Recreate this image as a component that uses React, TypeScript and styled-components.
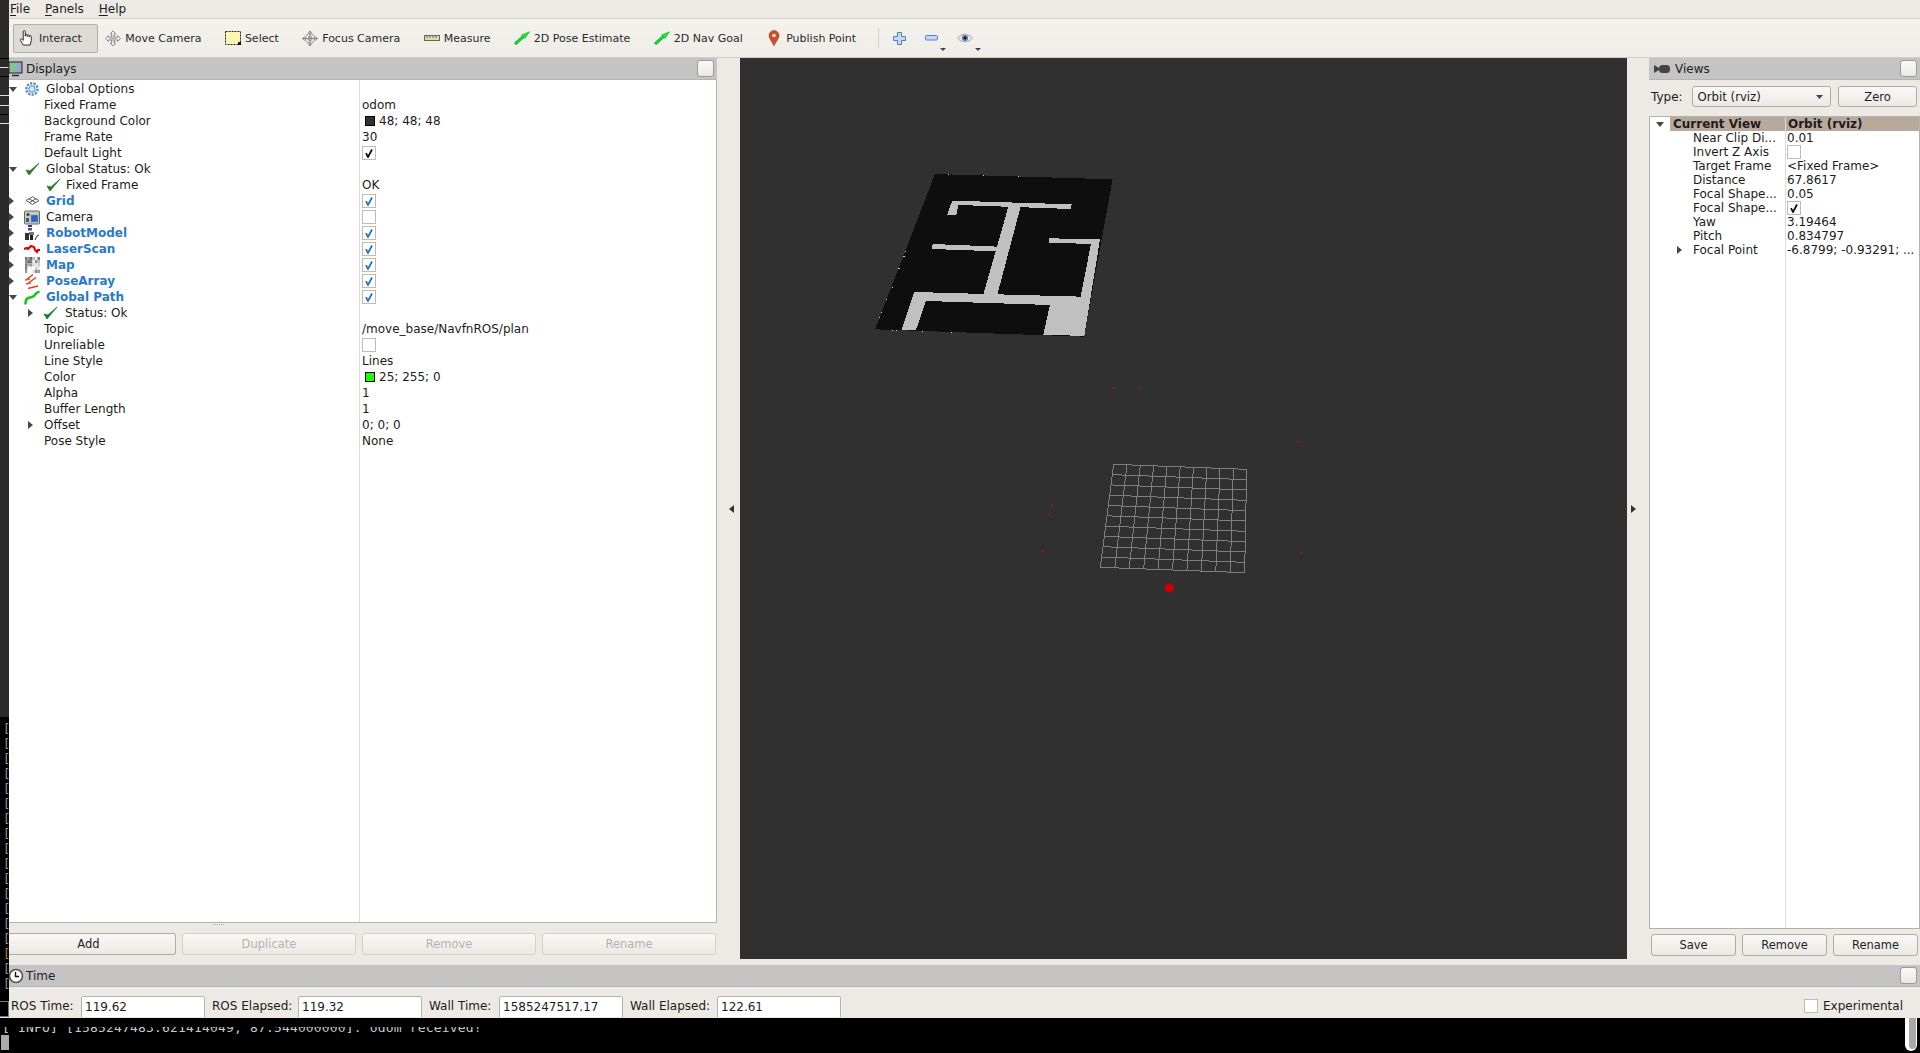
import React from "react";
import styled, { createGlobalStyle } from "styled-components";

const Global = createGlobalStyle`
  html, body { margin: 0; padding: 0; background: #000; }
  * { box-sizing: border-box; }
`;

const Page = styled.div`
  width: 1920px; height: 1053px; overflow: hidden; display: flex; flex-direction: column;
  font-family: "DejaVu Sans", sans-serif; font-size: 12px; color: #1c1c1c; background: #edeae5;
`;
const Upper = styled.div`display: flex; height: 1017px;`;
const Strip = styled.div`
  width: 9px; flex: none; background: #2b2b2b; display: flex; flex-direction: column;
  position: relative; overflow: hidden;
`;
const StripDark = styled.div`height: 717px; flex: none;`;
const StripBlack = styled.div`
  flex: 1; background: #000; font: 12px/15px "DejaVu Sans Mono", monospace; padding: 5px 0 0 3px; white-space: pre;
`;
const StripBox = styled.div`height: 16px; flex: none; background: #000; border: 1px solid #777; border-left: 0;`;
const StripLine = styled.div<{ $y: number }>`
  position: absolute; left: 0; width: 9px; height: 1px; top: ${p => p.$y}px; background: ${p => p.$y % 2 ? "#e0e0e0" : "#000"};
`;
const StripMark = styled.span<{ $amber?: boolean }>`
  display: block; opacity: 0.98; color: ${p => p.$amber ? "#b58a20" : "#999"};
`;

const Win = styled.div`flex: 1; display: flex; flex-direction: column; min-width: 0;`;
const MenuBar = styled.div`
  height: 19px; flex: none; display: flex; gap: 15px; padding: 0 0 0 1px; align-items: center; background: #edeae5; border-bottom: 1px solid #d6d3cd;
`;
const MenuItem = styled.span`
  line-height: 16px; & u { text-decoration: underline; text-underline-offset: 2px; }
`;
const ToolBar = styled.div`
  height: 39px; flex: none; display: flex; align-items: center; padding: 0 0 0 4px; gap: 1px; font-size: 11px;
  background: linear-gradient(#f4f2ee, #efede8); border-bottom: 1px solid #cfccc6;
`;
const ToolBtn = styled.div<{ $on?: boolean }>`
  height: 29px; display: flex; align-items: center; gap: 4px; padding: 0 15.4px 0 5px; border-radius: 2px;
  border: 1px solid ${p => p.$on ? "#b3b0aa" : "transparent"}; background: ${p => p.$on ? "#dddbd6" : "transparent"};
  white-space: nowrap; color: #2a2a2a;
`;
const ToolGlyph = styled.span`width: 16px; height: 16px; display: flex; align-items: center; justify-content: center; flex: none;`;
const ToolSep = styled.div`width: 1px; height: 20px; background: #d8d5cf; margin: 0 13px 0 4px;`;
const IconBtn = styled.div<{ $w: number; $mr?: number }>`
  width: ${p => p.$w}px; height: 29px; margin-right: ${p => p.$mr ?? 0}px; display: flex; align-items: center; position: relative; flex: none;
`;
const Drop = styled.span`
  position: absolute; right: 0; bottom: 2px; width: 0; height: 0; border-left: 3.5px solid transparent; border-right: 3.5px solid transparent; border-top: 3.5px solid #444;
`;

const Main = styled.div`height: 907px; flex: none; display: flex;`;
const LeftCol = styled.div`width: 708px; flex: none; display: flex; flex-direction: column;`;
const RightCol = styled.div`width: 271px; flex: none; display: flex; flex-direction: column;`;
const DockHead = styled.div<{ $pad?: number }>`
  height: 22px; flex: none; background: #c4c4c4; display: flex; align-items: center; position: relative; padding-left: ${p => p.$pad ?? 17}px; color: #222; border-bottom: 1px solid #b5b5b5;
`;
const HeadIcon = styled.span<{ $x?: number }>`position: absolute; left: ${p => p.$x ?? -1}px; top: 3px; width: 16px; height: 16px; display: flex; align-items: center;`;
const FloatBtn = styled.div`
  position: absolute; right: 3px; top: 2px; width: 17px; height: 17px; border: 1px solid #9d9b97; border-radius: 3px; background: linear-gradient(#fafafa, #e9e8e5);
`;
const Tree = styled.div<{ $col: number }>`
  flex: none; height: 843px; padding-top: 1px; overflow: hidden; border-right: 1px solid #b4b2ae; border-bottom: 1px solid #b4b2ae;
  background: linear-gradient(#dcdcdc, #dcdcdc) ${p => p.$col}px 0 / 1px 100% no-repeat, #fff;
`;
const Row = styled.div`height: 16px; display: flex; align-items: center; white-space: nowrap; line-height: 16px;`;
const NameCell = styled.div<{ $pad: number }>`width: 351px; flex: none; display: flex; align-items: center; padding-left: ${p => p.$pad}px;`;
const ValueCell = styled.div`flex: 1; padding-left: 2px; display: flex; align-items: center;`;
const ArrowBox = styled.span<{ $w: number }>`width: ${p => p.$w}px; flex: none; display: flex; align-items: center; position: relative; height: 12px;`;
const Arrow = styled.span<{ $dir: "r" | "d" }>`
  width: 0; height: 0; display: block;
  ${p => p.$dir === "r"
    ? `border-top: 4px solid transparent; border-bottom: 4px solid transparent; border-left: 5px solid #474747;`
    : `border-left: 4px solid transparent; border-right: 4px solid transparent; border-top: 5px solid #474747;`}
`;
const RowIcon = styled.span<{ $w: number; $gap: number }>`width: ${p => p.$w}px; height: 16px; margin-right: ${p => p.$gap}px; flex: none; display: flex; align-items: center; justify-content: center;`;
const Label = styled.span<{ $bold?: boolean }>`
  ${p => p.$bold ? "font-weight: 700; color: #2b78c8;" : ""}
`;
const CheckBox = styled.span`
  width: 14px; height: 14px; border: 1px solid #bdbbb7; background: #fff; display: inline-flex; align-items: center; justify-content: center; flex: none;
`;
const Swatch = styled.span<{ $c: string }>`
  width: 10px; height: 10px; background: ${p => p.$c}; border: 1px solid #000; margin: 0 4px 0 3px; flex: none;
`;
const Grip = styled.div<{ $w: number }>`
  height: 3px; display: flex; justify-content: center; flex: none; width: ${p => p.$w}px;
  &::after { content: ""; width: 12px; height: 1px; margin-top: 1px; background: repeating-linear-gradient(90deg, #b0aea9 0 1px, transparent 1px 2px); }
`;
const BtnRow = styled.div<{ $pad: string; $gap: number }>`display: flex; gap: ${p => p.$gap}px; padding: ${p => p.$pad};`;
const Btn = styled.div<{ $w: number; $off?: boolean; $flat?: boolean; $h?: number }>`
  width: ${p => p.$w}px; height: ${p => p.$h ?? 22}px; display: flex; align-items: center; justify-content: center; flex: none; font-size: 11.5px;
  border: 1px solid ${p => p.$off ? "#d3d0cb" : "#aeaca7"}; border-radius: 3px; ${p => p.$flat ? "border-left: 0; border-radius: 0 3px 3px 0; padding-right: 7px;" : ""}
  background: linear-gradient(#f9f8f6, #ebe9e5); color: ${p => p.$off ? "#b4b2ae" : "#1f1f1f"};
`;
const Gutter = styled.div<{ $w: number; $pl?: number; $pr?: number }>`
  width: ${p => p.$w}px; flex: none; display: flex; align-items: center; justify-content: center;
  padding: 0 ${p => p.$pr ?? 0}px 6px ${p => p.$pl ?? 0}px;
`;
const GutterArrow = styled.span<{ $dir: "l" | "r" }>`
  width: 0; height: 0; border-top: 4px solid transparent; border-bottom: 4px solid transparent;
  ${p => p.$dir === "l" ? "border-right: 5px solid #333;" : "border-left: 5px solid #333;"}
`;
const Render = styled.div`width: 887px; flex: none; display: flex; flex-direction: column;`;
const Scene = styled.svg`width: 887px; height: 901px; display: block; background: #303030; flex: none;`;

const TypeRow = styled.div`height: 36px; flex: none; display: flex; align-items: center; padding: 0 3px 3px 2px; gap: 7px;`;
const Combo = styled.div`
  width: 142px; height: 21px; display: flex; align-items: center; justify-content: space-between; padding: 0 7px 0 5px; margin-left: 2px; font-size: 11.7px;
  border: 1px solid #aeaca7; border-radius: 3px; background: linear-gradient(#f9f8f6, #ebe9e5);
`;
const ViewTree = styled.div`
  flex: none; height: 813px; width: 271px; border: 1px solid #b4b2ae; overflow: hidden;
  background: linear-gradient(#dcdcdc, #dcdcdc) 135px 0 / 1px 100% no-repeat, #fff;
`;
const ViewHead = styled.div`height: 14px; display: flex; align-items: center; font-weight: 700; line-height: 14px; white-space: nowrap;`;
const HeadArrowCell = styled.div`width: 20px; flex: none; padding-left: 6px; display: flex;`;
const HeadName = styled.div`width: 115px; flex: none; background: #b9a99c; padding-left: 3px; height: 14px;`;
const HeadValue = styled.div`flex: 1; background: #b9a99c; padding-left: 2px; height: 14px; border-left: 1px solid #dcdcdc;`;
const VRow = styled.div`height: 14px; display: flex; align-items: center; line-height: 14px; white-space: nowrap;`;
const VName = styled.div`width: 136px; flex: none; padding-left: 43px; position: relative;`;
const VValue = styled.div`flex: 1; padding-left: 1px; display: flex; align-items: center; overflow: hidden;`;
const VArrow = styled.span`position: absolute; left: 27px; top: 3px;`;

const TimeRow = styled.div`height: 30px; flex: none; display: flex; align-items: flex-start; padding: 9px 0 0 2px; position: relative; overflow: hidden;`;
const TimeLabel = styled.span<{ $w: number }>`width: ${p => p.$w}px; flex: none; line-height: 20px; white-space: nowrap;`;
const TimeInput = styled.div`
  width: 124px; height: 28px; flex: none; margin-right: 7px; border: 1px solid #b4b2ae; border-radius: 2px 2px 0 0; background: #fff; padding: 0 3px; line-height: 20px;
`;
const Experimental = styled.label`
  position: absolute; right: 17px; top: 12px; display: flex; align-items: center; gap: 5px;
`;
const Terminal = styled.div`
  height: 36px; flex: none; background: #000; color: #c8c8c8; position: relative; overflow: hidden;
  font: 13px/16px "DejaVu Sans Mono", monospace; border-top: 1px solid #e8e6e2;
`;
const TermClip = styled.div`height: 8px; margin-top: 9px; overflow: hidden; padding-left: 2px; white-space: pre;`;
const TermText = styled.div`margin-top: -7px; letter-spacing: 0.17px;`;
const Cursor = styled.div`width: 8px; height: 15px; margin: 0 0 0 1px; background: #aaa;`;
const TermScroll = styled.div`
  position: absolute; right: 3px; top: 0; width: 12px; height: 33px; background: #fff; border-radius: 0 0 6px 6px; padding: 0 1px 2px 4px; display: flex;
  &::after { content: ""; flex: 1; background: #a8a8a8; border-radius: 0 0 4px 4px; }
`;

/* ---------- icons ---------- */
const Check = ({ c = "#1e7d24", s = 16 }: { c?: string; s?: number }) => (
  <svg width={s} height={s} viewBox="0 0 16 16"><path d="M2 9 L5 14 L15 2 L6 10 Z" fill={c} stroke={c} strokeWidth="0.8" strokeLinejoin="round" /></svg>
);
const Tick = ({ c }: { c: string }) => (
  <svg width="10" height="10" viewBox="0 0 10 10"><path d="M2 5.2 L4 9 L8 1.5" fill="none" stroke={c} strokeWidth="1.8" /></svg>
);
const Gear = () => (
  <svg width="14" height="14" viewBox="0 0 14 14">
    <circle cx="7" cy="7" r="5.6" fill="none" stroke="#5b8fd0" strokeWidth="2.6" strokeDasharray="2.2 1.2" />
    <circle cx="7" cy="7" r="3.2" fill="#d8e6f6" stroke="#4f86cc" strokeWidth="1" />
  </svg>
);
const GridIcon = () => (
  <svg width="15" height="10" viewBox="0 0 15 10" fill="none" stroke="#444" strokeWidth="0.9">
    <path d="M7.5 .8 L14 4.5 L7.5 8.5 L1 4.5 Z M4 2.8 L10.8 6.6 M11 2.8 L4.2 6.6" />
  </svg>
);
const CamIcon = () => (
  <svg width="16" height="15" viewBox="0 0 16 15">
    <rect x=".5" y="1" width="15" height="13" rx="1" fill="#c8c8c8" stroke="#666" />
    <rect x="7" y="5" width="7" height="7" fill="#2f66b4" stroke="#8aa" strokeWidth=".5" />
    <circle cx="4" cy="4.5" r="1.6" fill="#444" /><rect x="2" y="8" width="3" height="4" fill="#555" />
  </svg>
);
const RobotIcon = () => (
  <svg width="16" height="16" viewBox="0 0 16 16">
    <rect x="4" y="0" width="4" height="2" fill="#2c3f8f" /><rect x="4" y="3" width="4" height="2.5" fill="#555" />
    <rect x="1" y="8" width="4" height="7" fill="#333" /><rect x="5" y="7" width="5" height="3" fill="#777" />
    <rect x="6" y="10" width="3" height="5" fill="#222" /><path d="M11 15 L13 11 L15 10" stroke="#333" fill="none" />
  </svg>
);
const LaserIcon = () => (
  <svg width="16" height="12" viewBox="0 0 16 12"><path d="M0 6 L3 5 L4 6 L7 3 L10 4 L11 7 L13 9 L14 7 L16 7" fill="none" stroke="#e40000" strokeWidth="2.2" /></svg>
);
const mapCells = [
  "#777", "#999", "#666", "#bbb", "#eee", "#777",
  "#888", "#666", "#777", "#eee", "#888", "#bbb",
  "#777", "#aaa", "#999", "#ddd", "#eee", "#ccc",
  "#777", "#fff", "#eee", "#fff", "#ccc", "#eee",
  "#999", "#fff", "#fff", "#ddd", "#888", "#999",
];
const MapIcon = () => (
  <svg width="15" height="16" viewBox="0 0 15 16">
    {mapCells.map((c, i) => <rect key={i} x={(i % 6) * 2.5} y={Math.floor(i / 6) * 3.2} width="2.5" height="3.2" fill={c} />)}
  </svg>
);
const PoseIcon = () => (
  <svg width="16" height="15" viewBox="0 0 16 15" fill="none" stroke="#e8301a" strokeWidth="1.3">
    <path d="M2 6 L9 0.5 M3 10 L12 3.5 M4 14.5 L14 12" />
    <path d="M1 6 L6 5 M2 10 L7 9" stroke="#ee5a40" />
  </svg>
);
const PathIcon = () => (
  <svg width="16" height="15" viewBox="0 0 16 15"><path d="M1.5 13.5 C1.5 8 4 8 8 7 C12 6 11 2.5 14.5 2" fill="none" stroke="#18c818" strokeWidth="2.6" strokeLinecap="round" /></svg>
);
const Monitor = () => (
  <svg width="16" height="16" viewBox="0 0 16 16">
    <defs><linearGradient id="scr" x1="0" x2="1"><stop offset="0" stopColor="#7fcf7a" /><stop offset="1" stopColor="#9b9be0" /></linearGradient></defs>
    <rect x="1" y="1" width="13" height="11" fill="url(#scr)" stroke="#222" /><path d="M4 14.5 H11" stroke="#222" strokeWidth="1.4" />
  </svg>
);
const ViewsIcon = () => (
  <svg width="16" height="10" viewBox="0 0 16 10"><path d="M0 1 L5 4 L5 6 L0 9 Z" fill="#444" /><rect x="5" y="1" width="11" height="8" rx="3.5" fill="#444" /></svg>
);
const Clock = () => (
  <svg width="16" height="16" viewBox="0 0 16 16"><circle cx="8" cy="8" r="6.5" fill="#fff" stroke="#555" strokeWidth="1.6" /><path d="M7.5 4 V8.5 H11" fill="none" stroke="#111" strokeWidth="1.4" /></svg>
);
const HandIcon = () => (
  <svg width="17" height="18" viewBox="0 0 17 18" fill="#fff" stroke="#222" strokeWidth="1" strokeLinejoin="round">
    <path d="M4.5 16.5 L1.5 11.5 C1 10.3 2.4 9.4 3.3 10.4 L4.5 11.5 V2.3 C4.5 .9 6.7 .9 6.7 2.3 V7 V6 C6.7 4.8 8.8 4.8 8.8 6 V7.5 V6.5 C8.8 5.4 10.9 5.4 10.9 6.5 V8 V7.3 C10.9 6.2 13 6.2 13 7.3 V12 L11.8 16.5 Z" />
  </svg>
);
const MoveIcon = () => (
  <svg width="17" height="17" viewBox="0 0 17 17" stroke="#6e6e6e" strokeWidth=".8" fill="#efefef">
    <path d="M8.5 .5 L11.5 3.5 H10 V7 H13.5 V5.5 L16.5 8.5 L13.5 11.5 V10 H10 V13.5 H11.5 L8.5 16.5 L5.5 13.5 H7 V10 H3.5 V11.5 L.5 8.5 L3.5 5.5 V7 H7 V3.5 H5.5 Z" />
    <path d="M5 8.5 H12 M8.5 5 V12" fill="none" strokeWidth=".6" />
  </svg>
);
const FocusIcon = () => (
  <svg width="17" height="17" viewBox="0 0 17 17" fill="none" stroke="#7a7a7a" strokeWidth=".9">
    <circle cx="8.5" cy="8.5" r="5" fill="#eee" />
    <path d="M8.5 .5 V16.5 M.5 8.5 H16.5" />
    <path d="M8.5 .5 L6.5 3 M8.5 .5 L10.5 3 M8.5 16.5 L6.5 14 M8.5 16.5 L10.5 14 M.5 8.5 L3 6.5 M.5 8.5 L3 10.5 M16.5 8.5 L14 6.5 M16.5 8.5 L14 10.5" />
    <circle cx="8.5" cy="8.5" r="2.2" />
  </svg>
);
const SelectIcon = () => (
  <svg width="16" height="14" viewBox="0 0 16 14"><rect x=".5" y=".5" width="15" height="13" fill="#fdf6b0" stroke="#222" strokeDasharray="2 1" /><rect x="13" y="11" width="3" height="3" fill="#111" /></svg>
);
const MeasureIcon = () => (
  <svg width="16" height="6" viewBox="0 0 16 6"><rect x=".5" y=".5" width="15" height="5" fill="#e2dda0" stroke="#666" /><path d="M3 1 V3 M6 1 V3 M9 1 V3 M12 1 V3" stroke="#666" /></svg>
);
const GreenArrow = () => (
  <svg width="16" height="14" viewBox="0 0 16 14"><path d="M1 13 L10 5" stroke="#0d9a1e" strokeWidth="3" /><path d="M1 13 L10 5" stroke="#14f032" strokeWidth="1.4" /><path d="M15.5 .8 L7.5 4 L11 7.5 Z" fill="#14f032" stroke="#0d9a1e" strokeWidth=".5" /></svg>
);
const PinIcon = () => (
  <svg width="12" height="16" viewBox="0 0 12 16"><path d="M6 16 C4 11 1 9 1 5.5 A5 5 0 0 1 11 5.5 C11 9 8 11 6 16 Z" fill="#c8502a" stroke="#8a3a1e" strokeWidth=".5" /><circle cx="6" cy="5.5" r="1.8" fill="#f5e4d8" /></svg>
);
const PlusIcon = () => (
  <svg width="13" height="13" viewBox="0 0 13 13"><path d="M4.5 .5 H8.5 V4.5 H12.5 V8.5 H8.5 V12.5 H4.5 V8.5 H.5 V4.5 H4.5 Z" fill="#c8d8ee" stroke="#4f80c4" /></svg>
);
const MinusIcon = () => (
  <svg width="13" height="6" viewBox="0 0 13 6"><rect x=".5" y=".5" width="12" height="4.5" rx="1" fill="#c8d8ee" stroke="#4f80c4" /></svg>
);
const EyeIcon = () => (
  <svg width="16" height="10" viewBox="0 0 16 10"><path d="M0.5 5 C4 0 12 0 15.5 5 C12 10 4 10 .5 5 Z" fill="#e6e6e6" stroke="#aaa" /><circle cx="8" cy="5" r="3" fill="#5870b0" /><circle cx="8" cy="5" r="1.2" fill="#111" /></svg>
);
const ComboArrow = () => <svg width="7" height="4" viewBox="0 0 7 4"><path d="M0 0 H7 L3.5 4 Z" fill="#444" /></svg>;

/* ---------- data ---------- */
type RowData = {
  pad: number; arrow?: "r" | "d"; arrowW?: number; icon?: React.ReactNode; iconW?: number; gap?: number;
  label: string; bold?: boolean; value?: string; swatch?: string; check?: "blue" | "black" | "off";
};
const rows: RowData[] = [
  { pad: 0, arrow: "d", arrowW: 15, icon: <Gear />, iconW: 16, gap: 6, label: "Global Options" },
  { pad: 35, label: "Fixed Frame", value: "odom" },
  { pad: 35, label: "Background Color", value: "48; 48; 48", swatch: "#303030" },
  { pad: 35, label: "Frame Rate", value: "30" },
  { pad: 35, label: "Default Light", check: "black" },
  { pad: 0, arrow: "d", arrowW: 15, icon: <Check />, iconW: 16, gap: 6, label: "Global Status: Ok" },
  { pad: 36, icon: <Check />, iconW: 16, gap: 5, label: "Fixed Frame", value: "OK" },
  { pad: 0, arrow: "r", arrowW: 15, icon: <GridIcon />, iconW: 16, gap: 6, label: "Grid", bold: true, check: "blue" },
  { pad: 0, arrow: "r", arrowW: 15, icon: <CamIcon />, iconW: 16, gap: 6, label: "Camera", check: "off" },
  { pad: 0, arrow: "r", arrowW: 15, icon: <RobotIcon />, iconW: 16, gap: 6, label: "RobotModel", bold: true, check: "blue" },
  { pad: 0, arrow: "r", arrowW: 15, icon: <LaserIcon />, iconW: 16, gap: 6, label: "LaserScan", bold: true, check: "blue" },
  { pad: 0, arrow: "r", arrowW: 15, icon: <MapIcon />, iconW: 16, gap: 6, label: "Map", bold: true, check: "blue" },
  { pad: 0, arrow: "r", arrowW: 15, icon: <PoseIcon />, iconW: 16, gap: 6, label: "PoseArray", bold: true, check: "blue" },
  { pad: 0, arrow: "d", arrowW: 15, icon: <PathIcon />, iconW: 16, gap: 6, label: "Global Path", bold: true, check: "blue" },
  { pad: 19, arrow: "r", arrowW: 14, icon: <Check />, iconW: 16, gap: 7, label: "Status: Ok" },
  { pad: 35, label: "Topic", value: "/move_base/NavfnROS/plan" },
  { pad: 35, label: "Unreliable", check: "off" },
  { pad: 35, label: "Line Style", value: "Lines" },
  { pad: 35, label: "Color", value: "25; 255; 0", swatch: "#19ff00" },
  { pad: 35, label: "Alpha", value: "1" },
  { pad: 35, label: "Buffer Length", value: "1" },
  { pad: 19, arrow: "r", arrowW: 16, label: "Offset", value: "0; 0; 0" },
  { pad: 35, label: "Pose Style", value: "None" },
];
const viewRows: { label: string; value?: string; check?: "black" | "off"; arrow?: boolean }[] = [
  { label: "Near Clip Di...", value: "0.01" },
  { label: "Invert Z Axis", check: "off" },
  { label: "Target Frame", value: "<Fixed Frame>" },
  { label: "Distance", value: "67.8617" },
  { label: "Focal Shape...", value: "0.05" },
  { label: "Focal Shape...", check: "black" },
  { label: "Yaw", value: "3.19464" },
  { label: "Pitch", value: "0.834797" },
  { label: "Focal Point", value: "-6.8799; -0.93291; ...", arrow: true },
];
const tools: { label: string; icon: React.ReactNode; on?: boolean }[] = [
  { label: "Interact", on: true, icon: <HandIcon /> },
  { label: "Move Camera", icon: <MoveIcon /> },
  { label: "Select", icon: <SelectIcon /> },
  { label: "Focus Camera", icon: <FocusIcon /> },
  { label: "Measure", icon: <MeasureIcon /> },
  { label: "2D Pose Estimate", icon: <GreenArrow /> },
  { label: "2D Nav Goal", icon: <GreenArrow /> },
  { label: "Publish Point", icon: <PinIcon /> },
];
const mapLight = [
  "307,122 665,133 662,147 325,135 319,165 291,165",
  "475,140 512,140 442,404 400,404",
  "248,252 445,260 441,274 246,267",
  "598,235 750,238 703,528 580,524 600,435 228,423 198,510 155,510 193,396 692,410 723,252 597,248",
];
const mapDots = [[293,43],[398,46],[503,48],[165,272],[160,287],[145,325],[125,380],[108,418],[93,457],[87,472],[125,511],[137,509],[215,514],[303,517]];
const corners = { a: [71, 43], b: [470, 58], c: [464, 368], d: [31, 352] };
const lerp = (p: number[], q: number[], t: number) => [p[0] + (q[0] - p[0]) * t, p[1] + (q[1] - p[1]) * t];
const gridLines = Array.from({ length: 11 }, (_, i) => i / 10).flatMap(t => {
  const h1 = lerp(corners.a, corners.d, t), h2 = lerp(corners.b, corners.c, t);
  const v1 = lerp(corners.a, corners.b, t), v2 = lerp(corners.d, corners.c, t);
  return [[...h1, ...h2], [...v1, ...v2]];
});
const redDots = [[1112,387],[1138,387],[1298,441],[1051,504],[1048,514],[1042,550],[1300,552]];
const stripRows = Array.from({ length: 18 }, (_, i) => i);

const renderCheck = (k?: "blue" | "black" | "off") =>
  k ? <CheckBox>{k !== "off" && <Tick c={k === "blue" ? "#2a6fc0" : "#111"} />}</CheckBox> : null;

export default function App() {
  return (
    <Page>
      <Global />
      <Upper>
        <Strip>
          <StripDark />
          <StripBlack>{stripRows.map(i => <StripMark key={i} $amber={i === 15}>[</StripMark>)}</StripBlack>
          <StripBox />
          {[58, 67, 76, 95, 105, 114, 123].map(y => <StripLine key={y} $y={y} />)}
        </Strip>
        <Win>
          <MenuBar>
            <MenuItem><u>F</u>ile</MenuItem>
            <MenuItem><u>P</u>anels</MenuItem>
            <MenuItem><u>H</u>elp</MenuItem>
          </MenuBar>
          <ToolBar>
            {tools.map(t => (
              <ToolBtn key={t.label} $on={t.on}><ToolGlyph>{t.icon}</ToolGlyph>{t.label}</ToolBtn>
            ))}
            <ToolSep />
            <IconBtn $w={31.5}><PlusIcon /></IconBtn>
            <IconBtn $w={20.5} $mr={10.5}><MinusIcon /><Drop /></IconBtn>
            <IconBtn $w={24}><EyeIcon /><Drop /></IconBtn>
          </ToolBar>
          <Main>
            <LeftCol>
              <DockHead><HeadIcon><Monitor /></HeadIcon>Displays<FloatBtn /></DockHead>
              <Tree $col={350}>
                {rows.map((r, i) => (
                  <Row key={i}>
                    <NameCell $pad={r.pad}>
                      {r.arrow && <ArrowBox $w={r.arrowW ?? 15}><Arrow $dir={r.arrow} /></ArrowBox>}
                      {r.icon && <RowIcon $w={r.iconW ?? 16} $gap={r.gap ?? 6}>{r.icon}</RowIcon>}
                      <Label $bold={r.bold}>{r.label}</Label>
                    </NameCell>
                    <ValueCell>
                      {r.swatch && <Swatch $c={r.swatch} />}
                      {r.value}
                      {renderCheck(r.check)}
                    </ValueCell>
                  </Row>
                ))}
              </Tree>
              <Grip $w={420} />
              <BtnRow $pad="7px 0 0 0" $gap={6}>
                <Btn $w={167} $flat>Add</Btn>
                <Btn $w={174} $off>Duplicate</Btn>
                <Btn $w={174} $off>Remove</Btn>
                <Btn $w={174} $off>Rename</Btn>
              </BtnRow>
            </LeftCol>
            <Gutter $w={23} $pl={5}><GutterArrow $dir="l" /></Gutter>
            <Render>
              <Scene viewBox="740 58 887 901" shapeRendering="crispEdges">
                <g transform="translate(850 160) scale(0.3333)">
                  <polygon points="255,42 788,58 702,530 75,508" fill="#0e0e0e" />
                  {mapLight.map((p, i) => <polygon key={i} points={p} fill="#c0c0c0" />)}
                  {mapDots.map(([x, y], i) => <rect key={i} x={x} y={y} width="4" height="3" fill="#cfcfcf" />)}
                </g>
                <g transform="translate(1090 450) scale(0.3333)">
                  {gridLines.map((l, i) => <line key={i} x1={l[0]} y1={l[1]} x2={l[2]} y2={l[3]} stroke="#7e7e7e" strokeWidth="3" />)}
                  <circle cx="238" cy="414" r="14" fill="#c80000" />
                </g>
                {redDots.map(([x, y], i) => <rect key={i} x={x} y={y} width="2" height="2" fill="#a01010" />)}
              </Scene>
            </Render>
            <Gutter $w={22} $pr={9}><GutterArrow $dir="r" /></Gutter>
            <RightCol>
              <DockHead $pad={26}><HeadIcon $x={5}><ViewsIcon /></HeadIcon>Views<FloatBtn /></DockHead>
              <TypeRow>
                Type:
                <Combo>Orbit (rviz)<ComboArrow /></Combo>
                <Btn $w={79} $h={21}>Zero</Btn>
              </TypeRow>
              <ViewTree>
                <ViewHead>
                  <HeadArrowCell><Arrow $dir="d" /></HeadArrowCell>
                  <HeadName>Current View</HeadName>
                  <HeadValue>Orbit (rviz)</HeadValue>
                </ViewHead>
                {viewRows.map((r, i) => (
                  <VRow key={i}>
                    <VName>
                      {r.arrow && <VArrow><Arrow $dir="r" /></VArrow>}
                      <Label>{r.label}</Label>
                    </VName>
                    <VValue>{r.value}{renderCheck(r.check)}</VValue>
                  </VRow>
                ))}
              </ViewTree>
              <BtnRow $pad="5px 3px 0 2px" $gap={6}>
                <Btn $w={85}>Save</Btn>
                <Btn $w={85}>Remove</Btn>
                <Btn $w={85}>Rename</Btn>
              </BtnRow>
            </RightCol>
          </Main>
          <DockHead><HeadIcon><Clock /></HeadIcon>Time<FloatBtn /></DockHead>
          <TimeRow>
            <TimeLabel $w={70}>ROS Time:</TimeLabel><TimeInput>119.62</TimeInput>
            <TimeLabel $w={86}>ROS Elapsed:</TimeLabel><TimeInput>119.32</TimeInput>
            <TimeLabel $w={70}>Wall Time:</TimeLabel><TimeInput>1585247517.17</TimeInput>
            <TimeLabel $w={87}>Wall Elapsed:</TimeLabel><TimeInput>122.61</TimeInput>
            <Experimental><CheckBox />Experimental</Experimental>
          </TimeRow>
        </Win>
      </Upper>
      <Terminal>
        <TermClip><TermText>[ INFO] [1585247483.621414049, 87.544000000]: odom received!</TermText></TermClip>
        <Cursor />
        <TermScroll />
      </Terminal>
    </Page>
  );
}
